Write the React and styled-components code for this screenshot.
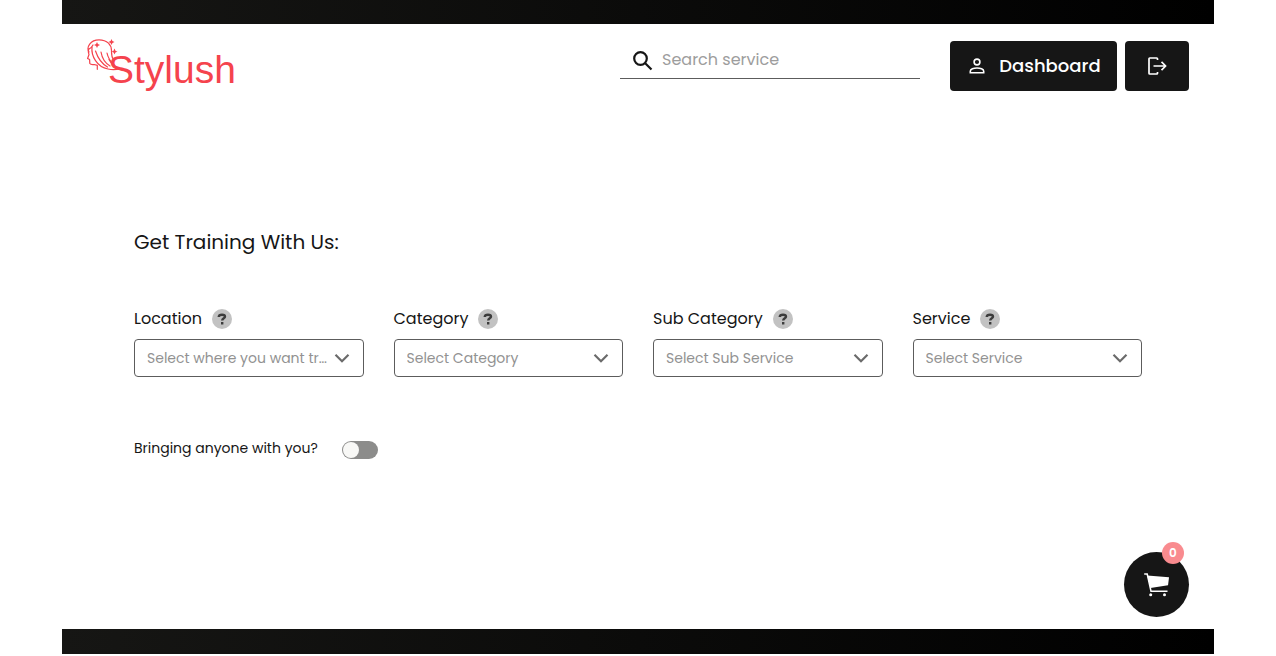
import React, { useState } from "react";
import styled, { createGlobalStyle } from "styled-components";

const GlobalStyle = createGlobalStyle`
  * { box-sizing: border-box; }
  body {
    margin: 0;
    background: #fff;
    color: #161616;
    font-family: Poppins, Inter, "Liberation Sans", sans-serif;
    font-size: 16px;
    -webkit-font-smoothing: antialiased;
  }
  button, input, select { font: inherit; color: inherit; }
`;

const Page = styled.div`
  display: flex;
  flex-direction: column;
  width: calc(100% - 32px);
  max-width: 1152px;
  min-height: 100vh;
  margin: 0 auto;
  padding-bottom: 2px;
`;

const Band = styled.div`
  flex: none;
  height: ${({ $height }) => $height}px;
  background: linear-gradient(90deg, #161614, #000);
`;

const Body = styled.div`
  position: relative;
  flex: 1;
`;

const Header = styled.header`
  display: flex;
  flex-wrap: wrap;
  align-items: flex-start;
  gap: 8px;
  padding: 17px 25px;
`;

const Logo = styled.a`
  display: flex;
  margin-right: auto;
  color: #f5434d;
  text-decoration: none;

  svg { margin-top: -2px; }
`;

const LogoName = styled.span`
  margin-left: -15px;
  font-family: "Liberation Sans", sans-serif;
  font-size: 39px;
  line-height: 58px;
`;

const Search = styled.label`
  display: flex;
  align-items: center;
  gap: 7px;
  width: 300px;
  height: 38px;
  margin-right: 22px;
  padding-left: 11px;
  border-bottom: 1px solid #5c5c5c;
`;

const SearchInput = styled.input`
  flex: 1;
  min-width: 0;
  padding: 0;
  border: 0;
  outline: 0;
  background: transparent;
  &::placeholder { color: #9d9d9d; opacity: 1; }
`;

const DarkButton = styled.button`
  display: flex;
  align-items: center;
  justify-content: center;
  gap: 13px;
  width: ${({ $width }) => $width}px;
  height: 50px;
  padding: 0;
  border: 0;
  border-radius: 4px;
  background: #161616;
  color: #fff;
  font-size: 18px;
  font-weight: 500;
  line-height: 26px;
  cursor: pointer;
`;

const Content = styled.main`
  padding: 111px 72px 150px;
`;

const Title = styled.h1`
  margin: 0;
  font-size: 20px;
  font-weight: 400;
  line-height: 30px;
`;

const Fields = styled.div`
  display: grid;
  grid-template-columns: repeat(auto-fit, minmax(200px, 1fr));
  gap: 30px;
  margin-top: 52px;
`;

const FieldHead = styled.div`
  display: flex;
  align-items: center;
  gap: 10px;
  margin-bottom: 10px;
  line-height: 20px;
`;

const Help = styled.button`
  display: grid;
  place-items: center;
  width: 20px;
  height: 20px;
  padding: 0;
  border: 0;
  border-radius: 50%;
  background: #c2c2c2;
  color: #3c3c3c;
  cursor: pointer;
`;

const SelectBox = styled.div`
  display: grid;
  align-items: center;

  > * { grid-area: 1 / 1; }
  svg {
    justify-self: end;
    margin-right: 14px;
    pointer-events: none;
  }
`;

const Select = styled.select`
  appearance: none;
  width: 100%;
  min-width: 0;
  height: 38px;
  padding: 0 34px 0 12px;
  border: 1px solid #5c5c5c;
  border-radius: 4px;
  background: #fff;
  color: #929292;
  font-size: 14px;
  text-overflow: ellipsis;
`;

const ToggleRow = styled.label`
  display: flex;
  align-items: flex-start;
  gap: 24px;
  width: fit-content;
  margin-top: 61px;
  font-size: 14px;
  line-height: 20px;
`;

const Toggle = styled.input`
  appearance: none;
  display: flex;
  align-items: center;
  width: 36px;
  height: 18px;
  margin: 3px 0 0;
  padding: 1px;
  border-radius: 9px;
  background: #8c8c8b;
  cursor: pointer;

  &::before {
    content: "";
    width: 16px;
    height: 16px;
    border-radius: 50%;
    background: #f8f8f6;
  }
  &:checked { justify-content: flex-end; background: #161616; }
`;

const CartButton = styled.button`
  position: absolute;
  right: 25px;
  bottom: 12px;
  display: grid;
  place-items: center;
  width: 65px;
  height: 65px;
  padding: 0;
  border: 0;
  border-radius: 50%;
  background: #161616;
  color: #fff;
  cursor: pointer;
`;

const CartCount = styled.span`
  position: absolute;
  top: -10px;
  right: 5px;
  width: 22px;
  border-radius: 50%;
  background: #f98b8f;
  font-size: 12px;
  font-weight: 600;
  line-height: 22px;
  text-align: center;
`;

const LogoIcon = () => (
  <svg width="36" height="36" viewBox="0 0 36 36" fill="none" stroke="currentColor" strokeWidth="1.200" strokeLinecap="round" strokeLinejoin="round" aria-hidden="true">
    <path d="M2 13C-1 8 3.500 .8 12 .8c8 0 13 5 12.500 12 0 3 .5 6 2 8" />
    <path d="M2 9.500C.6 12 1.500 14 2 15.500L.6 19.500l2 1 .2 4c1 1.500 3 1 4.500 1l3 .8v4" />
    <path d="M5 8C4 17 10 28 21 30c4 1 8 1 12-.5-6-1.500-9-5-11-9" />
    <path d="M8.500 12c2 6 5 12 12 16M14 13c1 6 4 11 9 14M20 14c1 5 3 8 7 12" />
    <path d="M2 10c2-.5 3-2 4-4" />
    <g fill="currentColor" stroke="none">
      <path d="M10 3q.4 2.600 3 3-2.600.4-3 3-.4-2.600-3-3 2.600-.4 3-3z" />
      <path d="M24.500 0q.4 2.600 3 3-2.600.4-3 3-.4-2.600-3-3 2.600-.4 3-3z" />
      <path d="M27.500 9.500q.4 2.600 3 3-2.600.4-3 3-.4-2.600-3-3 2.600-.4 3-3z" />
    </g>
  </svg>
);

const SearchIcon = () => (
  <svg width="24" height="24" viewBox="0 0 24 24" fill="none" stroke="#161616" strokeWidth="2.2" aria-hidden="true">
    <circle cx="9.5" cy="10.5" r="6.300" />
    <path d="M14 15l6.500 6.500" />
  </svg>
);

const PersonIcon = () => (
  <svg width="20" height="20" viewBox="0 0 20 20" fill="none" stroke="currentColor" strokeWidth="1.6" aria-hidden="true">
    <circle cx="11" cy="6" r="2.900" />
    <path d="M4.300 16.700v-1.500c0-2 3.500-3.200 6.700-3.200s6.700 1.200 6.700 3.200v1.500z" />
  </svg>
);

const LogoutIcon = () => (
  <svg width="22" height="22" viewBox="0 0 22 22" fill="none" stroke="currentColor" strokeWidth="1.700" strokeLinejoin="round" aria-hidden="true">
    <path d="M11.500 5V3.800q0-.8-.8-.8H3.800q-.8 0-.8.8v14.400q0 .8.8.8h6.900q.8 0 .8-.8V17M7.500 11H19.500M15.500 6.800l4.200 4.200-4.200 4.200" />
  </svg>
);

const HelpMark = () => (
  <svg width="10" height="12" viewBox="0 0 10 12" fill="none" stroke="currentColor" strokeWidth="2.4" aria-hidden="true">
    <path d="M1.700 4C1.800 2.500 3.200 1.700 5 1.700s3 .8 3 2.100c0 1.600-2.800 1.600-2.800 3.800" />
    <path d="M5.200 9v2.500" />
  </svg>
);

const Chevron = () => (
  <svg width="16" height="9" viewBox="0 0 16 9" fill="none" stroke="#6b6b6b" strokeWidth="2.2" aria-hidden="true">
    <path d="M1.500 .8L8 7.200 14.500 .8" />
  </svg>
);

const CartIcon = () => (
  <svg width="26" height="24" viewBox="0 0 26 24" fill="none" aria-hidden="true">
    <path d="M.2 1h3l3.800 17.200h16.500" stroke="currentColor" strokeWidth="1.500" />
    <path d="M3.200 2.500L25 4.300l-1 8L6.500 15z" fill="currentColor" />
    <circle cx="6.700" cy="21.800" r="1.500" fill="currentColor" />
    <circle cx="20.500" cy="21.800" r="1.500" fill="currentColor" />
  </svg>
);

const FIELDS = [
  { id: "location", label: "Location", prompt: "Select where you want training" },
  { id: "category", label: "Category", prompt: "Select Category" },
  { id: "sub-category", label: "Sub Category", prompt: "Select Sub Service" },
  { id: "service", label: "Service", prompt: "Select Service" },
];

const SelectField = ({ id, label, prompt }) => (
  <div>
    <FieldHead>
      <label htmlFor={id}>{label}</label>
      <Help type="button" aria-label={`About ${label}`}>
        <HelpMark />
      </Help>
    </FieldHead>
    <SelectBox>
      <Select id={id} defaultValue="">
        <option value="">{prompt}</option>
      </Select>
      <Chevron />
    </SelectBox>
  </div>
);

export default function App() {
  const [guest, setGuest] = useState(false);
  return (
    <>
      <GlobalStyle />
      <Page>
        <Band $height={24} />
        <Body>
          <Header>
            <Logo href="#">
              <LogoIcon />
              <LogoName>Stylush</LogoName>
            </Logo>
            <Search>
              <SearchIcon />
              <SearchInput type="text" aria-label="Search service" placeholder="Search service" />
            </Search>
            <DarkButton type="button" $width={167}>
              <PersonIcon />
              Dashboard
            </DarkButton>
            <DarkButton type="button" $width={64} aria-label="Log out">
              <LogoutIcon />
            </DarkButton>
          </Header>
          <Content>
            <Title>Get Training With Us:</Title>
            <Fields>
              {FIELDS.map((field) => <SelectField key={field.id} {...field} />)}
            </Fields>
            <ToggleRow>
              Bringing anyone with you?
              <Toggle type="checkbox" role="switch" checked={guest} onChange={(e) => setGuest(e.target.checked)} />
            </ToggleRow>
          </Content>
          <CartButton type="button" aria-label="Cart">
            <CartIcon />
            <CartCount>0</CartCount>
          </CartButton>
        </Body>
        <Band $height={25} />
      </Page>
    </>
  );
}
